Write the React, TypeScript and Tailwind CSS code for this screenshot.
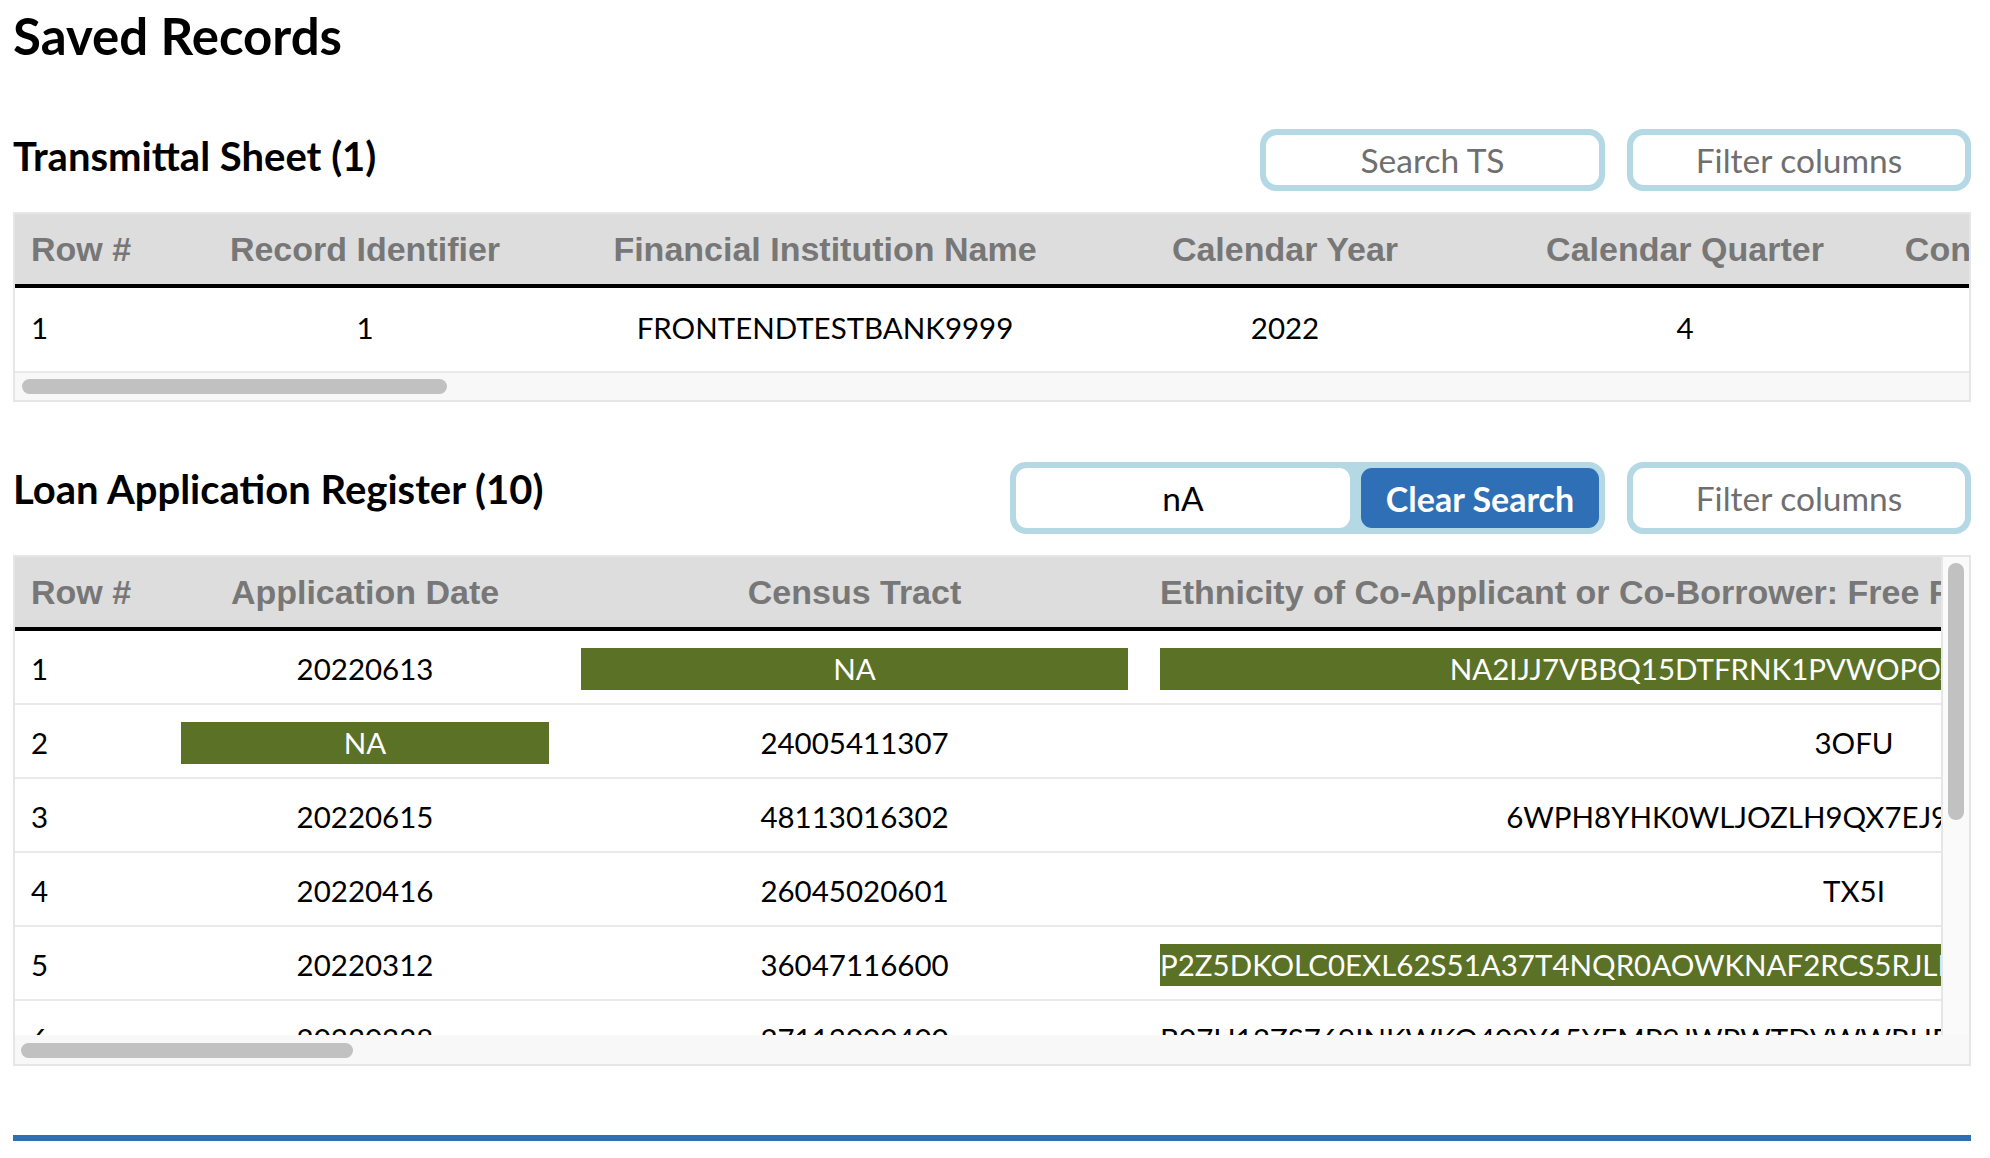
import React from "react";

type Col = { label: string; w: string; left?: boolean };
type Cell = { text: string; hit?: boolean };

const TS_COLS: Col[] = [
  { label: "Row #", w: "w-[150px]", left: true },
  { label: "Record Identifier", w: "w-[400px]" },
  { label: "Financial Institution Name", w: "w-[520px]" },
  { label: "Calendar Year", w: "w-[400px]" },
  { label: "Calendar Quarter", w: "w-[400px]" },
  { label: "Contact Person's Name", w: "w-[420px]" },
];

const TS_ROWS: Cell[][] = [
  [{ text: "1" }, { text: "1" }, { text: "FRONTENDTESTBANK9999" }, { text: "2022" }, { text: "4" }, { text: "" }],
];

const LAR_COLS: Col[] = [
  { label: "Row #", w: "w-[150px]", left: true },
  { label: "Application Date", w: "w-[400px]" },
  { label: "Census Tract", w: "w-[579px]" },
  {
    label: "Ethnicity of Co-Applicant or Co-Borrower: Free Form Text Field for Other Hispanic or Latino",
    w: "w-[1420px]",
  },
];

const LAR_ROWS: Cell[][] = [
  [{ text: "1" }, { text: "20220613" }, { text: "NA", hit: true }, { text: "NA2IJJ7VBBQ15DTFRNK1PVWOPOX4KTZ8MR3HLQ6DWE", hit: true }],
  [{ text: "2" }, { text: "NA", hit: true }, { text: "24005411307" }, { text: "3OFU" }],
  [{ text: "3" }, { text: "20220615" }, { text: "48113016302" }, { text: "6WPH8YHK0WLJOZLH9QX7EJ9M2RBT4KDV8SQA" }],
  [{ text: "4" }, { text: "20220416" }, { text: "26045020601" }, { text: "TX5I" }],
  [
    { text: "5" },
    { text: "20220312" },
    { text: "36047116600" },
    { text: "P2Z5DKOLC0EXL62S51A37T4NQR0AOWKNAF2RCS5RJLNA8QW3ZT6VYKDM1XP0HGE4BU7SNA2LOC9RFJ", hit: true },
  ],
  [
    { text: "6" },
    { text: "20220228" },
    { text: "27113000400" },
    { text: "B07H12ZS769INKWKQ402Y15YEMP9JWPWTDVWWRHDK3M8QZL0XNA5TGC1YE4VRBJ7UWOSP2FKH6DI9" },
  ],
];

/* ─── Controls ─── */

function BlueFrame({ className, children }: { className: string; children: React.ReactNode }) {
  return <div className={`rounded-[16px] bg-[#b5d8e5] p-[6px] ${className}`}>{children}</div>;
}

function FilterBox({ h }: { h: string }) {
  return (
    <BlueFrame className={`w-[344px] ${h}`}>
      <input
        readOnly
        placeholder="Filter columns"
        className="w-full h-full rounded-[11px] bg-white text-center text-[33.5px] outline-none placeholder:text-[#6f6f6f]"
      />
    </BlueFrame>
  );
}

/* ─── Table pieces ─── */

function HeaderRow({ cols }: { cols: Col[] }) {
  return (
    <div className="flex items-center h-[74px] bg-[#dddddd] border-b-4 border-black">
      {cols.map((c) => (
        <div
          key={c.label}
          className={`${c.w} shrink-0 px-[16px] whitespace-nowrap font-['Liberation_Sans',Arial,sans-serif] text-[34px] font-bold text-[#777777] ${
            c.left ? "text-left" : "text-center"
          }`}
        >
          {c.label}
        </div>
      ))}
    </div>
  );
}

function BodyRow({ cols, cells, h, pad }: { cols: Col[]; cells: Cell[]; h: string; pad: string }) {
  return (
    <div className={`flex items-center ${h} border-b-2 border-[#e9e9e9]`}>
      {cols.map((c, i) => {
        const cell = cells[i];
        return (
          <div key={c.label} className={`${c.w} shrink-0 px-[16px] ${pad}`}>
            <div
              className={`h-[42px] leading-[42px] whitespace-nowrap text-[29.5px] ${c.left ? "text-left" : "text-center"} ${
                cell.hit ? "bg-[#5a7126] text-white" : "text-black"
              }`}
            >
              {cell.text}
            </div>
          </div>
        );
      })}
    </div>
  );
}

function HTrack({ h, thumb }: { h: string; thumb: string }) {
  return (
    <div className={`${h} bg-[#f8f8f8]`}>
      <div className={`${thumb} h-[15px] rounded-full bg-[#c1c1c1]`} />
    </div>
  );
}

export default function App() {
  return (
    <div className="min-h-[1158px] bg-white pl-[13px] pr-[19px] text-black font-['Source_Sans_Pro',Lato,sans-serif]">
      <h1 className="pt-[10px] text-[51px] font-bold leading-none">Saved Records</h1>

      {/* Transmittal Sheet */}
      <div className="mt-[68px] flex justify-between items-start">
        <h2 className="mt-[7px] text-[40px] font-bold leading-none">Transmittal Sheet (1)</h2>
        <div className="flex gap-[22px]">
          <BlueFrame className="w-[345px] h-[62px]">
            <input
              readOnly
              placeholder="Search TS"
              className="w-full h-full rounded-[11px] bg-white text-center text-[33.5px] outline-none placeholder:text-[#6f6f6f]"
            />
          </BlueFrame>
          <FilterBox h="h-[62px]" />
        </div>
      </div>

      <div className="mt-[21px] border-2 border-[#e6e6e6]">
        <div className="overflow-hidden">
          <HeaderRow cols={TS_COLS} />
          {TS_ROWS.map((r, i) => (
            <BodyRow key={i} cols={TS_COLS} cells={r} h="h-[85px]" pad="pb-[4px]" />
          ))}
        </div>
        <HTrack h="h-[27px] pt-[6px]" thumb="ml-[7px] w-[425px]" />
      </div>

      {/* Loan Application Register */}
      <div className="mt-[60px] flex justify-between items-start">
        <h2 className="mt-[7px] text-[40px] font-bold leading-none">Loan Application Register (10)</h2>
        <div className="flex gap-[22px] items-stretch">
          <BlueFrame className="flex gap-[11px] h-[72px]">
            <input
              readOnly
              value="nA"
              className="w-[334px] h-full rounded-[11px] bg-white text-center text-[33.5px] text-black outline-none"
            />
            <button className="w-[238px] h-full rounded-[11px] bg-[#2f6fb6] text-[34px] font-bold text-white">
              Clear Search
            </button>
          </BlueFrame>
          <FilterBox h="h-[72px]" />
        </div>
      </div>

      <div className="mt-[21px] border-2 border-[#e6e6e6]">
        <div className="flex">
          <div className="flex-1 min-w-0 overflow-hidden">
            <HeaderRow cols={LAR_COLS} />
            <div className="h-[404px] overflow-hidden">
              {LAR_ROWS.map((r, i) => (
                <BodyRow key={i} cols={LAR_COLS} cells={r} h="h-[74px]" pad="pt-[4px]" />
              ))}
            </div>
          </div>
          <div className="w-[28px] shrink-0 border-l-2 border-[#e6e6e6] bg-[#fafafa] pt-[6px] pl-[5px]">
            <div className="w-[16px] h-[257px] rounded-full bg-[#c1c1c1]" />
          </div>
        </div>
        <HTrack h="h-[29px] pt-[8px]" thumb="ml-[6px] w-[332px]" />
      </div>

      <div className="mt-[69px] h-[6px] bg-[#2f6fb6]" />
    </div>
  );
}
